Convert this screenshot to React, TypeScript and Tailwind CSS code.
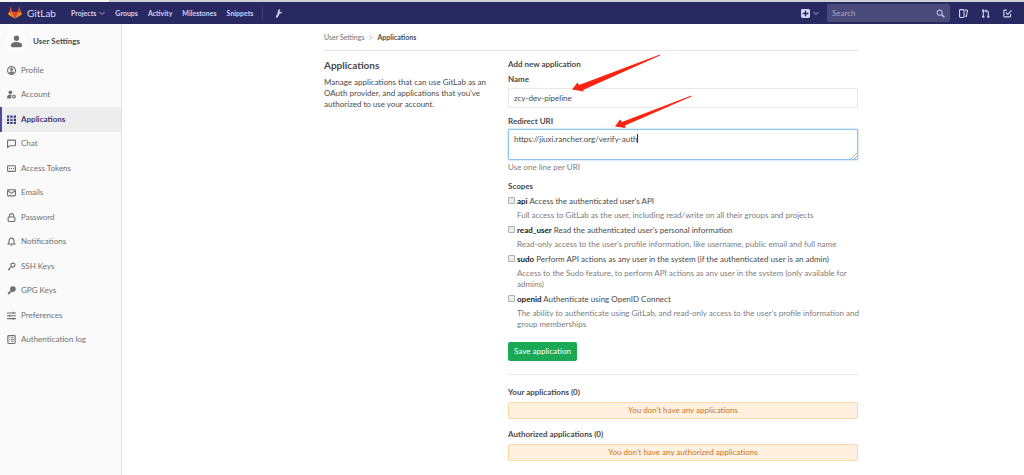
import React from 'react';

type IconProps = { className?: string; children: React.ReactNode };

const Icon: React.FC<IconProps> = ({ className = 'size-[9px]', children }) => (
    <svg viewBox="0 0 16 16" className={`shrink-0 ${className}`} fill="none" stroke="currentColor" strokeWidth="2" aria-hidden="true">
        {children}
    </svg>
);

const ChevronDown: React.FC = () => (
    <Icon className="size-[6px]">
        <path d="M1 5l7 7 7-7" />
    </Icon>
);

const Tanuki: React.FC = () => (
    <svg viewBox="0 0 36 32" className="h-3 w-[14px] shrink-0" aria-hidden="true">
        <path fill="#e24329" d="M18 31.5l6.6-18.9H11.4z" />
        <path fill="#fc6d26" d="M18 31.5L11.4 12.6H2.1z" />
        <path fill="#fca326" d="M2.1 12.6L.1 18.8a1.4 1.4 0 0 0 .5 1.5L18 31.5z" />
        <path fill="#e24329" d="M2.1 12.6h9.3L7.4.5c-.2-.6-1-.6-1.3 0z" />
        <path fill="#fc6d26" d="M18 31.5l6.6-18.9h9.3z" />
        <path fill="#fca326" d="M33.9 12.6l2 6.2a1.4 1.4 0 0 1-.5 1.5L18 31.5z" />
        <path fill="#e24329" d="M33.9 12.6h-9.3l4-12.1c.2-.6 1-.6 1.3 0z" />
    </svg>
);

const menu = [
    {
        label: 'Profile',
        icon: (
            <>
                <circle cx="8" cy="8" r="7" />
                <circle cx="8" cy="6.3" r="2.6" fill="currentColor" stroke="none" />
                <path d="M3.4 12.4C4 10 6 9.6 8 9.6s4 .4 4.6 2.8C11 13.7 9.5 14 8 14s-3-.3-4.6-1.6z" fill="currentColor" stroke="none" />
            </>
        ),
    },
    {
        label: 'Account',
        icon: (
            <g fill="currentColor" stroke="none">
                <circle cx="6" cy="4" r="3.3" />
                <path d="M0 14c0-3.5 2-6 5.5-6 1.3 0 2.3.3 3 .9A5 5 0 0 0 8 15H1.5C.6 15 0 14.7 0 14z" />
                <path fillRule="evenodd" d="M12 7.5l1 1.2 1.6-.2.3 1.5 1.3 1-.9 1.3.2 1.6-1.5.2L13 15.5l-1.3-.9-1.6.3-.2-1.6-1.2-1 .9-1.3-.2-1.6 1.6-.2zm.3 2.7a1.4 1.4 0 1 0 0 2.8 1.4 1.4 0 0 0 0-2.8z" />
            </g>
        ),
    },
    {
        label: 'Applications',
        icon: (
            <g fill="currentColor" stroke="none">
                <path d="M0 1h4v4H0zM6 1h4v4H6zM12 1h4v4h-4zM0 6.5h4v4H0zM12 6.5h4v4h-4zM0 12h4v4H0zM6 12h4v4H6zM12 12h4v4h-4z" />
                <path fillRule="evenodd" d="M6 6.5h4v4H6zm1.3 1.3v1.4h1.4V7.8z" />
            </g>
        ),
    },
    { label: 'Chat', icon: <path d="M2.5 2h11A1.5 1.5 0 0 1 15 3.5v7a1.5 1.5 0 0 1-1.5 1.5H5l-4 3V3.5A1.5 1.5 0 0 1 2.5 2z" /> },
    {
        label: 'Access Tokens',
        icon: (
            <>
                <rect x="1" y="3" width="14" height="10" rx="1.5" />
                <path d="M3.5 8h2M7 8h2M10.5 8h2" />
            </>
        ),
    },
    {
        label: 'Emails',
        icon: (
            <>
                <rect x="1" y="3" width="14" height="11" rx="1.5" />
                <path d="M2 5l6 4.5L14 5" />
            </>
        ),
    },
    {
        label: 'Password',
        icon: (
            <>
                <rect x="2" y="7" width="12" height="8" rx="1.5" />
                <path d="M4.5 7V4.5a3.5 3.5 0 0 1 7 0V7" />
            </>
        ),
    },
    {
        label: 'Notifications',
        icon: (
            <>
                <path d="M2 12.5c1.5-1.5 1.5-3 1.7-5.5C4 4 5.5 2 8 2s4 2 4.3 5c.2 2.5.2 4 1.7 5.5z" />
                <path d="M6.5 14.5h3" />
            </>
        ),
    },
    {
        label: 'SSH Keys',
        icon: (
            <>
                <circle cx="10.5" cy="5.5" r="3.5" />
                <path d="M8 8l-6 6M3 12.5l2 2" />
            </>
        ),
    },
    {
        label: 'GPG Keys',
        icon: (
            <>
                <circle cx="10.5" cy="5.5" r="4" fill="currentColor" />
                <path d="M8 8l-6 6M4 12l1.5 1.5" strokeWidth="3" />
            </>
        ),
    },
    { label: 'Preferences', icon: <path d="M0 3.5h16M0 8.5h16M0 13.5h16M11 1.5v4M5 6.5v4M11 11.5v4" /> },
    {
        label: 'Authentication log',
        icon: (
            <>
                <rect x="1.5" y="1" width="13" height="14" rx="1.5" />
                <path d="M4 5h1.5M7 5h5M4 8h1.5M7 8h5M4 11h1.5M7 11h5" strokeWidth="1.5" />
            </>
        ),
    },
];

const scopes = [
    { id: 'api', title: "Access the authenticated user's API", help: 'Full access to GitLab as the user, including read/write on all their groups and projects' },
    { id: 'read_user', title: "Read the authenticated user's personal information", help: "Read-only access to the user's profile information, like username, public email and full name" },
    { id: 'sudo', title: 'Perform API actions as any user in the system (if the authenticated user is an admin)', help: 'Access to the Sudo feature, to perform API actions as any user in the system (only available for admins)' },
    { id: 'openid', title: 'Authenticate using OpenID Connect', help: "The ability to authenticate using GitLab, and read-only access to the user's profile information and group memberships" },
];

const Navbar: React.FC = () => (
    <header className="flex h-[22px] items-center bg-[#292961] pr-3 pl-2 text-[#d1d1f0]">
        <a href="#" className="flex items-center gap-[5px] text-[10px] text-[#dcdcf2]">
            <Tanuki />
            GitLab
        </a>
        <nav className="ml-[15px] flex items-center gap-[10px] text-[7px] font-bold">
            <button type="button" className="flex items-center gap-[3px]">
                Projects
                <ChevronDown />
            </button>
            <a href="#">Groups</a>
            <a href="#">Activity</a>
            <a href="#">Milestones</a>
            <a href="#">Snippets</a>
        </nav>
        <div className="ml-[9px] h-3 w-px bg-[#40407a]" />
        <a href="#" aria-label="Admin area" className="ml-[11px]">
            <Icon>
                <path fill="currentColor" stroke="none" d="M9.5.5C7 1.5 6 4 7 6.5L3.5 13c-.5 1-.2 2 .6 2.5s1.9.1 2.4-.8L10 8.300c2.5 0 4.5-1.8 4.700-4.300L12.5 5.800 10.300 5l-.5-2.300L11.5.4z" />
            </Icon>
        </a>
        <div className="ml-auto flex items-center">
            <button type="button" aria-label="New" className="mr-2 flex items-center gap-[3px]">
                <svg viewBox="0 0 16 16" className="size-[9px]" aria-hidden="true">
                    <rect width="16" height="16" rx="2.5" fill="#d1d1f0" />
                    <path d="M8 3v10M3 8h10" stroke="#292961" strokeWidth="2.5" />
                </svg>
                <ChevronDown />
            </button>
            <div className="flex h-[18px] w-[123px] items-center rounded-[2px] bg-[#49497a] px-[5px]">
                <input type="search" aria-label="Search" placeholder="Search" className="min-w-0 flex-1 bg-transparent text-[8px] outline-none placeholder:text-[#a9a9cc]" />
                <Icon className="size-[9px] text-[#b5b5d8]">
                    <circle cx="6.5" cy="6.5" r="4.5" />
                    <path d="M10 10l5 5" strokeWidth="3" />
                </Icon>
            </div>
            <div className="ml-[9px] flex items-center gap-[13px]">
                <a href="#" aria-label="Issues">
                    <Icon>
                        <rect x="1" y="1" width="8" height="14" rx="1.5" />
                        <path d="M11 2h2.5A1.5 1.5 0 0 1 15 4l-2 9h-2" />
                    </Icon>
                </a>
                <a href="#" aria-label="Merge requests">
                    <Icon>
                        <path d="M4 3v12M13 15V5.5a2 2 0 0 0-2-2H9" />
                        <path d="M10 0v7L6.5 3.5zM2 1h4v4H2zM2 12h4v3H2zM11 12h4v3h-4z" fill="currentColor" stroke="none" />
                    </Icon>
                </a>
                <a href="#" aria-label="Todos">
                    <Icon>
                        <path d="M7 2H3a1.5 1.5 0 0 0-1.5 1.5v9A1.5 1.5 0 0 0 3 14h9a1.5 1.5 0 0 0 1.5-1.5V9" />
                        <path d="M5 6l3.5 3.5L15 2.5" />
                    </Icon>
                </a>
            </div>
        </div>
    </header>
);

const Sidebar: React.FC = () => (
    <aside className="w-[122px] shrink-0 border-r border-[#e3e3e3] bg-[#fafafa] text-[8px] leading-[11px]">
        <a href="#" className="flex h-[34px] items-center gap-[7px] pl-[6px] font-bold text-[#4a4a4a]">
            <span className="flex size-5 items-center justify-center rounded-full bg-white text-[#6e6e6e]">
                <svg viewBox="0 0 16 16" className="size-[13px]" fill="currentColor" aria-hidden="true">
                    <circle cx="8" cy="4" r="3.3" />
                    <path d="M1 13c0-3 2.5-4.5 7-4.5s7 1.5 7 4.5c0 1.5-1 2-2 2H3c-1 0-2-.5-2-2z" />
                </svg>
            </span>
            User Settings
        </a>
        <nav className="grid h-[294px] auto-rows-fr">
            {menu.map((item) => {
                const active = item.label === 'Applications';
                return (
                    <a
                        key={item.label}
                        href="#"
                        aria-current={active ? 'page' : undefined}
                        className={`flex items-center gap-[5px] border-l-2 pl-[5px] ${active ? 'border-[#4b4ba3] bg-[#ededed] font-bold text-[#39397d]' : 'border-transparent text-[#707070]'}`}
                    >
                        <Icon>{item.icon}</Icon>
                        {item.label}
                    </a>
                );
            })}
        </nav>
    </aside>
);

const Annotations: React.FC = () => (
    <svg viewBox="0 0 120 76" className="pointer-events-none absolute top-[-5px] left-[64px] z-10 h-[76px] w-[120px]" fill="#fb2412" aria-hidden="true">
        <path d="M0 35.5 5.5 28.5 7 31 88 .5 88 1.5 11 36 12 37.5z" />
        <path d="M43 72.5 48 65.5 50 68 119.5 41.5 119.5 42.5 53 71.5 53.5 74z" />
    </svg>
);

const Alert: React.FC<{ children: React.ReactNode }> = ({ children }) => (
    <p className="rounded-[2px] border border-[#fdd9a8] bg-[#fff0df] py-[2px] text-center text-[#c7762c]">{children}</p>
);

const ApplicationForm: React.FC = () => (
    <form onSubmit={(e) => e.preventDefault()}>
        <h5 className="font-bold">Add new application</h5>
        <label htmlFor="name" className="mt-1 block font-bold">Name</label>
        <input id="name" type="text" defaultValue="zcy-dev-pipeline" className="mt-[3px] block h-5 w-full rounded-[1px] border border-[#e8e8e8] px-[5px] outline-none" />
        <label htmlFor="uri" className="mt-2 block font-bold">Redirect URI</label>
        <div className="relative mt-[2px]">
            <textarea id="uri" defaultValue="https://jiuxi.rancher.org/verify-auth" className="block h-[31px] w-full resize-none rounded-[1px] border border-[#8fc4f5] px-[5px] py-1 shadow-[0_0_2px_#80bdf5] outline-none" />
            <span className="absolute top-[5px] left-[129px] h-[9px] w-px bg-[#333]" />
            <svg viewBox="0 0 6 6" className="absolute right-[1px] bottom-[1px] size-[6px]" stroke="#999" strokeWidth="0.7" aria-hidden="true">
                <path d="M0 6 6 0M3 6 6 3" />
            </svg>
        </div>
        <p className="mt-[2px] text-[#808080]">Use one line per URI</p>
        <fieldset className="mt-2">
            <legend className="mb-1 font-bold">Scopes</legend>
            {scopes.map((scope) => (
                <div key={scope.id} className="mb-1">
                    <div className="flex items-start gap-[2px]">
                        <input id={scope.id} type="checkbox" className="mt-px size-[7px] shrink-0 appearance-none rounded-[1px] border border-[#b0b0b0] bg-[#ececec] checked:bg-[#4b4ba3]" />
                        <label htmlFor={scope.id}>
                            <span className="font-bold text-[#222]">{scope.id}</span> {scope.title}
                        </label>
                    </div>
                    <p className="-mr-1 mt-[3px] pl-[9px] text-[#7d7d7d]">{scope.help}</p>
                </div>
            ))}
        </fieldset>
        <button type="submit" className="mt-2 h-[19px] rounded-[2px] bg-[#1aaa55] px-[6px] text-white">Save application</button>
    </form>
);

export default function App() {
    return (
        <div className="flex min-h-screen flex-col bg-white font-['Lato','Open_Sans',sans-serif] text-[#4a4a4a]">
            <div className="flex h-[2px]">
                <div className="w-[109px] bg-[#f5f5f5]" />
                <div className="flex-1 bg-[#cfd0d4]" />
            </div>
            <Navbar />
            <div className="flex flex-1">
                <Sidebar />
                <main className="min-w-0 flex-1 pl-9 text-[8px] leading-[11px]">
                    <div className="mx-auto max-w-[534px]">
                        <nav aria-label="Breadcrumb" className="flex h-[27px] items-center gap-1 border-b border-[#e5e5e5] text-[7px]">
                            <a href="#" className="text-[#707070]">User Settings</a>
                            <Icon className="size-[5px] text-[#808080]">
                                <path d="M5 1l7 7-7 7" />
                            </Icon>
                            <span className="font-bold">Applications</span>
                        </nav>
                        <div className="grid grid-cols-12 gap-x-[18px] pt-2">
                            <section className="col-span-4">
                                <h4 className="mb-[5px] text-[10px] leading-[13px] font-bold">Applications</h4>
                                <p>Manage applications that can use GitLab as an OAuth provider, and applications that you've authorized to use your account.</p>
                            </section>
                            <section className="relative col-span-8">
                                <Annotations />
                                <ApplicationForm />
                                <hr className="mt-[13px] border-[#e8e8e8]" />
                                <h5 className="mt-3 mb-1 font-bold">Your applications (0)</h5>
                                <Alert>You don't have any applications</Alert>
                                <h5 className="mt-[10px] mb-1 font-bold">Authorized applications (0)</h5>
                                <Alert>You don't have any authorized applications</Alert>
                            </section>
                        </div>
                    </div>
                </main>
            </div>
        </div>
    );
}
